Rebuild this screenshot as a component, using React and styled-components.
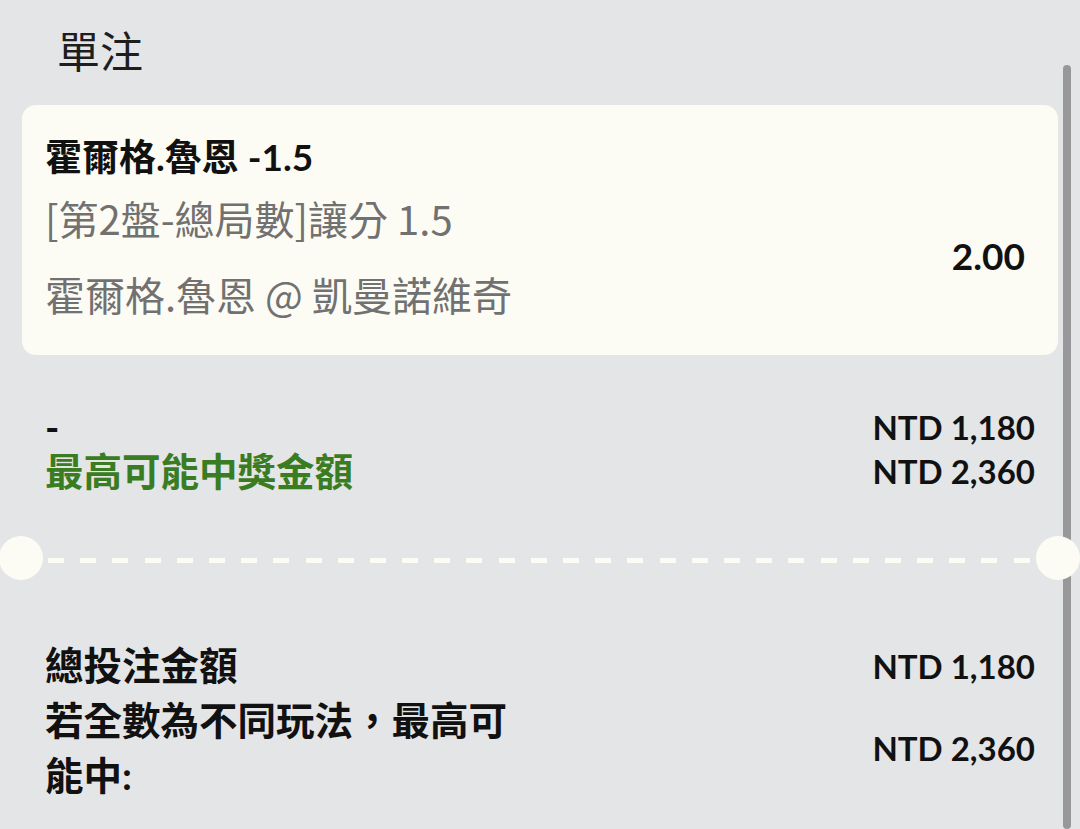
import React from "react";
import styled, { createGlobalStyle } from "styled-components";

const GlobalStyle = createGlobalStyle`
  html, body {
    margin: 0;
    padding: 0;
    background: #e4e5e7;
  }
  body {
    font-family: Lato, "Noto Sans CJK TC", sans-serif;
  }
`;

const Page = styled.div`
  position: relative;
  width: 1080px;
  height: 829px;
  overflow: hidden;
  background: #e4e5e7;
  color: #111;
`;

const Scrollbar = styled.div`
  position: absolute;
  top: 65px;
  bottom: 0;
  right: 9px;
  width: 8px;
  border-radius: 4px;
  background: #98989b;
`;

const Header = styled.div`
  height: 105px;
  box-sizing: border-box;
  padding: 0 0 7px 57px;
  display: flex;
  align-items: center;
`;

const Title = styled.h1`
  margin: 0;
  font-size: 43px;
  font-weight: 400;
  color: #1e1e1e;
`;

const Card = styled.div`
  margin: 0 22px;
  height: 250px;
  box-sizing: border-box;
  padding: 28px 33px 33px 23px;
  background: #fdfcf4;
  border-radius: 14px;
`;

const Selection = styled.div`
  font-size: 37px;
  font-weight: 700;
  line-height: 48px;
  color: #111;
`;

const CardBody = styled.div`
  display: flex;
  align-items: center;
  justify-content: space-between;
`;

const Meta = styled.div`
  font-family: "Noto Sans CJK TC", sans-serif;
  font-size: 40px;
  line-height: 52px;
  color: #717171;
  margin-top: ${({ $gap }) => $gap}px;
  white-space: nowrap;
`;

const Odds = styled.div`
  font-size: 37px;
  font-weight: 700;
  color: #111;
  padding-top: 10px;
`;

const Summary = styled.div`
  padding: ${({ $top }) => $top}px 45px 0;
  display: flex;
  flex-direction: column;
`;

const Row = styled.div`
  display: flex;
  align-items: center;
  justify-content: space-between;
`;

const Label = styled.div`
  font-size: 38.5px;
  font-weight: 700;
  line-height: ${({ $lh }) => $lh}px;
  color: ${({ $green }) => ($green ? "#3a7c22" : "#111")};
  max-width: 480px;
`;

const Amount = styled.div`
  font-size: 33px;
  font-weight: 700;
  line-height: 44px;
  color: #111;
  white-space: nowrap;
`;

const Divider = styled.div`
  position: relative;
  height: 44px;
  margin-top: ${({ $top }) => $top}px;
  padding: 0 50px 0 48px;
  display: flex;
  align-items: center;
  justify-content: space-between;
  &::before,
  &::after {
    content: "";
    position: absolute;
    top: 0;
    width: 44px;
    height: 44px;
    border-radius: 50%;
    background: #fdfcf4;
    z-index: 2;
  }
  &::before {
    left: -1px;
  }
  &::after {
    right: 0;
  }
`;

const Dash = styled.span`
  display: block;
  width: 16px;
  height: 5px;
  margin-top: 4px;
  background: #fdfcf4;
`;

const dashes = Array.from({ length: 31 });

export default function App() {
  return (
    <Page>
      <GlobalStyle />
      <Scrollbar />
      <Header>
        <Title>單注</Title>
      </Header>
      <Card>
        <Selection>霍爾格.魯恩 -1.5</Selection>
        <CardBody>
          <div>
            <Meta $gap={11}>[第2盤-總局數]讓分 1.5</Meta>
            <Meta $gap={24}>霍爾格.魯恩 @ 凱曼諾維奇</Meta>
          </div>
          <Odds>2.00</Odds>
        </CardBody>
      </Card>

      <Summary $top={50}>
        <Row>
          <Label $lh={44}>-</Label>
          <Amount>NTD 1,180</Amount>
        </Row>
        <Row>
          <Label $green $lh={44}>最高可能中獎金額</Label>
          <Amount>NTD 2,360</Amount>
        </Row>
      </Summary>

      <Divider $top={43}>
        {dashes.map((_, i) => (
          <Dash key={i} />
        ))}
      </Divider>

      <Summary $top={58}>
        <Row>
          <Label $lh={55}>總投注金額</Label>
          <Amount>NTD 1,180</Amount>
        </Row>
        <Row>
          <Label $lh={55}>若全數為不同玩法，最高可能中:</Label>
          <Amount>NTD 2,360</Amount>
        </Row>
      </Summary>
    </Page>
  );
}
